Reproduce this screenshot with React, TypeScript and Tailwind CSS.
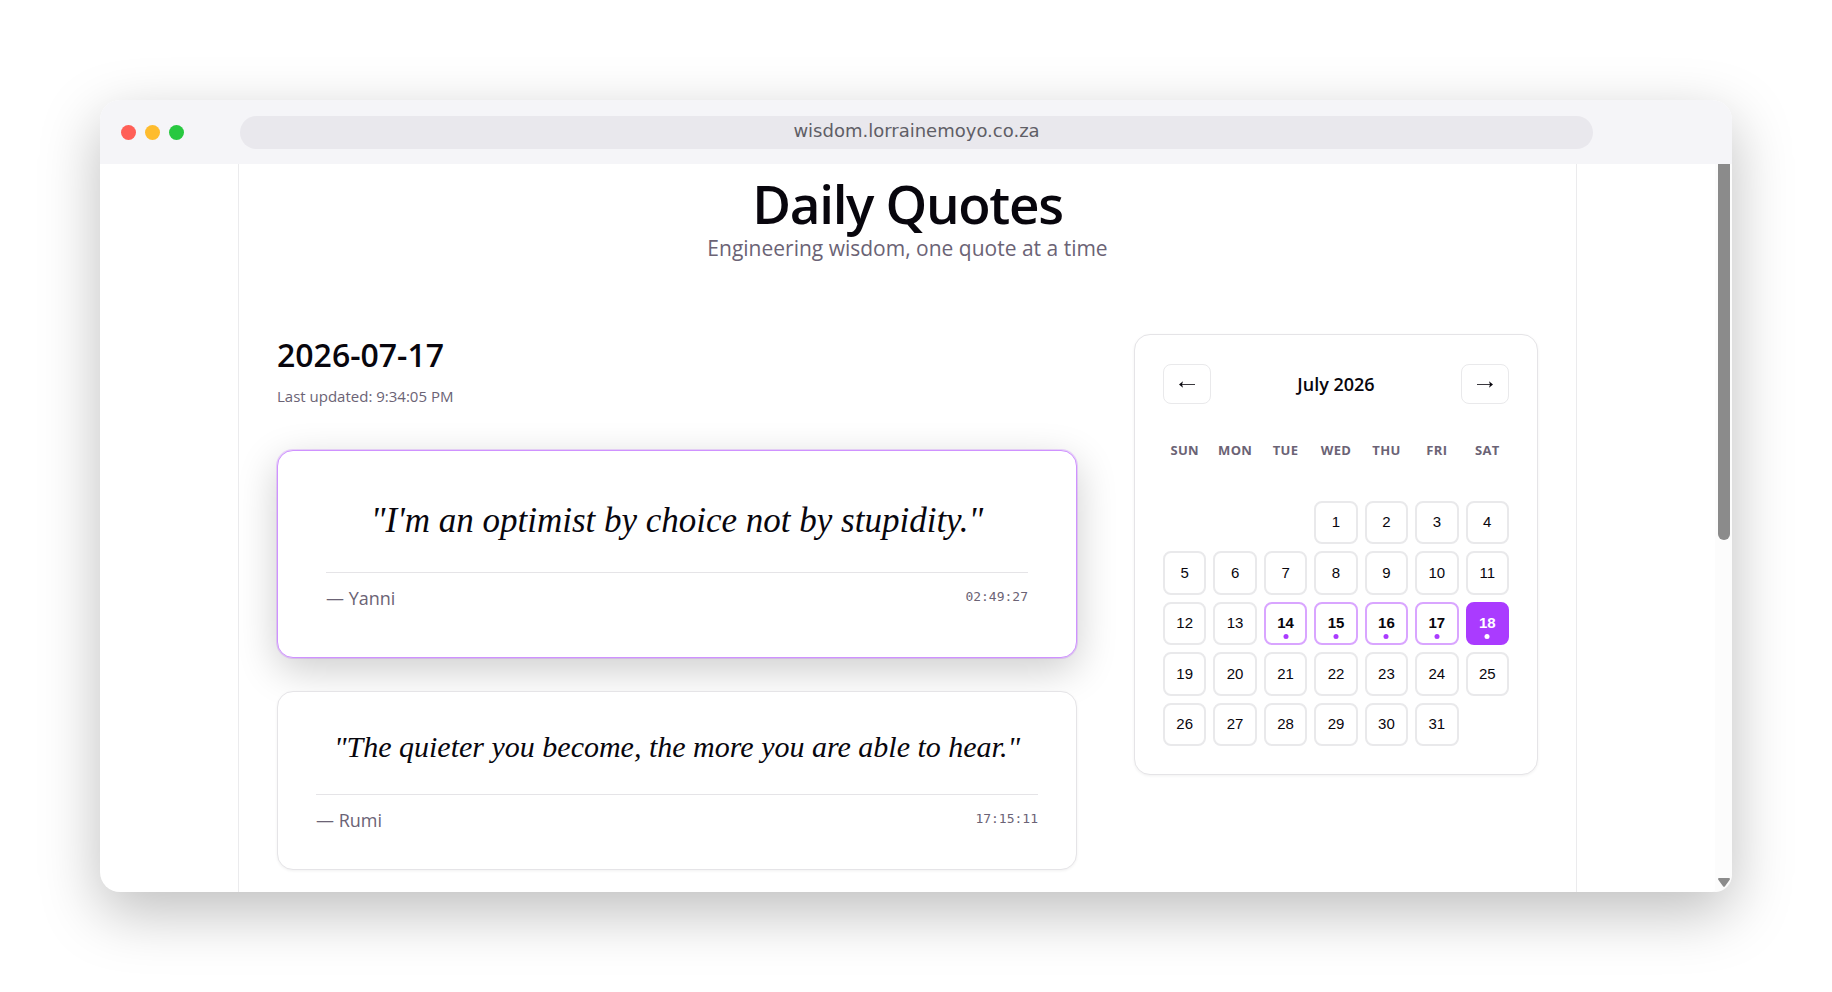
import { useState } from "react";
import clsx from "clsx";

type Quote = { text: string; author: string; time: string };

const quotes: Quote[] = [
  { text: "I'm an optimist by choice not by stupidity.", author: "Yanni", time: "02:49:27" },
  { text: "The quieter you become, the more you are able to hear.", author: "Rumi", time: "17:15:11" },
];

const weekdays = ["Sun", "Mon", "Tue", "Wed", "Thu", "Fri", "Sat"];
const blanks = [0, 1, 2];
const days = Array.from({ length: 31 }, (_, i) => i + 1);
const daysWithQuotes = [14, 15, 16, 17, 18];

const BrowserBar = () => (
  <header className="flex h-16 shrink-0 items-center rounded-t-[20px] bg-[#f5f5f8]">
    <div className="flex w-[140px] gap-[9px] pl-[21px]">
      <span className="size-[15px] rounded-full bg-[#ff5f57]" />
      <span className="size-[15px] rounded-full bg-[#febc2e]" />
      <span className="size-[15px] rounded-full bg-[#28c840]" />
    </div>
    <input
      readOnly
      aria-label="Address"
      value="wisdom.lorrainemoyo.co.za"
      className="h-[33px] min-w-0 flex-1 rounded-full bg-[#e9e8ed] pb-1 text-center font-['DejaVu_Sans',sans-serif] text-lg text-[#5f5e66] outline-none"
    />
    <div className="w-[139px]" />
  </header>
);

const Scrollbar = () => (
  <div className="flex w-[17px] shrink-0 flex-col items-center justify-between rounded-br-[20px] bg-[#fcfcfc] pb-[5px]">
    <div className="h-[52%] w-3 rounded-b-full bg-[#8b8b8b]" />
    <svg width="12" height="9" viewBox="0 0 12 9" fill="#8b8b8b">
      <path d="M1.2 0h9.6c1 0 1.5 1 .9 1.8L7 8.2c-.5.8-1.5.8-2 0L.3 1.8C-.3 1 .2 0 1.2 0z" />
    </svg>
  </div>
);

const QuoteCard = ({ quote, featured }: { quote: Quote; featured: boolean }) => (
  <article
    className={clsx(
      "rounded-2xl border bg-white",
      featured
        ? "border-[#cf92ff] p-12 shadow-[0_12px_40px_rgba(0,0,0,0.2)] ring-1 ring-[#aa3bff]/20"
        : "relative border-[#e5e4e7] p-[38px] shadow-[0_1px_3px_rgba(0,0,0,0.06)]"
    )}
  >
    <blockquote
      className={clsx(
        "mb-[30px] text-center font-['Liberation_Serif',serif] text-[#08060d] italic",
        featured ? "text-[35px] leading-[43px]" : "text-3xl leading-[34px]"
      )}
    >
      "{quote.text}"
    </blockquote>
    <div className="flex items-start justify-between border-t border-[#e5e4e7] pt-[14px]">
      <span className="text-lg leading-[22px]">— {quote.author}</span>
      <time className="font-['DejaVu_Sans_Mono',monospace] text-[13px] leading-5">{quote.time}</time>
    </div>
  </article>
);

const Arrow = ({ flip }: { flip?: boolean }) => (
  <svg width="16" height="9" viewBox="0 0 16 9" className={flip ? "rotate-180" : ""}>
    <path d="M2 4.5h14" stroke="#3a383e" strokeWidth="1" fill="none" />
    <path d="M0 4.5 4 1.3 3 4.5l1 3.2z" fill="#08060d" />
  </svg>
);

const navButton = "flex h-10 w-12 items-center justify-center rounded-lg border border-[#e9e9eb]";

const Calendar = () => {
  const [selected, setSelected] = useState(18);

  return (
    <aside className="w-[404px] shrink-0 self-start rounded-2xl border border-[#e5e4e7] bg-white px-7 pt-[29px] pb-7 shadow-[0_1px_3px_rgba(0,0,0,0.06)]">
      <div className="flex items-center justify-between">
        <button type="button" aria-label="Previous month" className={navButton}>
          <Arrow />
        </button>
        <h3 className="text-lg font-semibold text-[#08060d]">July 2026</h3>
        <button type="button" aria-label="Next month" className={navButton}>
          <Arrow flip />
        </button>
      </div>

      <div className="mt-9 grid grid-cols-7 gap-[7px] text-center text-[13px] leading-5 font-bold tracking-wide uppercase">
        {weekdays.map(day => (
          <span key={day}>{day}</span>
        ))}
      </div>

      <div className="mt-[41px] grid grid-cols-7 gap-[7px] font-['Liberation_Sans',sans-serif] text-[15px]">
        {blanks.map(b => (
          <span key={b} />
        ))}
        {days.map(day => {
          const hasQuote = daysWithQuotes.includes(day);
          const isSelected = day === selected;
          return (
            <button
              key={day}
              type="button"
              onClick={() => setSelected(day)}
              className={clsx(
                "relative aspect-square rounded-lg border-2",
                isSelected
                  ? "border-[#aa3bff] bg-[#aa3bff] font-bold text-white"
                  : hasQuote
                    ? "border-[#d9a5ff] font-bold text-[#08060d]"
                    : "border-[#e9e9eb] text-[#08060d]"
              )}
            >
              {day}
              {hasQuote && (
                <span
                  className={clsx(
                    "absolute bottom-1 left-1/2 size-[5px] -translate-x-1/2 rounded-full",
                    isSelected ? "bg-white" : "bg-[#aa3bff]"
                  )}
                />
              )}
            </button>
          );
        })}
      </div>
    </aside>
  );
};

export default function App() {
  return (
    <div className="flex min-h-screen flex-col bg-white p-[100px] font-['Open_Sans',sans-serif] text-[#6b6375]">
      <div className="flex flex-1 flex-col rounded-[20px] bg-white shadow-[0_20px_60px_rgba(0,0,0,0.26)]">
        <BrowserBar />
        <div className="flex flex-1">
          <main className="min-w-0 flex-1">
            <div className="mx-auto h-full max-w-[1339px] border-x border-[#ebebed] px-[38px] pt-[10px] pb-5">
              <div className="text-center">
                <h1 className="text-[53px] leading-[60px] font-semibold tracking-tight text-[#08060d]">Daily Quotes</h1>
                <p className="text-[21px] leading-7">Engineering wisdom, one quote at a time</p>
              </div>

              <div className="mt-[72px] flex gap-[57px]">
                <section className="min-w-0 flex-1">
                  <h2 className="text-[32px] leading-[42px] font-semibold text-[#08060d]">2026-07-17</h2>
                  <p className="mt-2 text-[15px] leading-6">Last updated: 9:34:05 PM</p>
                  <div className="mt-[42px] flex flex-col gap-[33px]">
                    {quotes.map((quote, i) => (
                      <QuoteCard key={quote.time} quote={quote} featured={i === 0} />
                    ))}
                  </div>
                </section>
                <Calendar />
              </div>
            </div>
          </main>
          <Scrollbar />
        </div>
      </div>
    </div>
  );
}
